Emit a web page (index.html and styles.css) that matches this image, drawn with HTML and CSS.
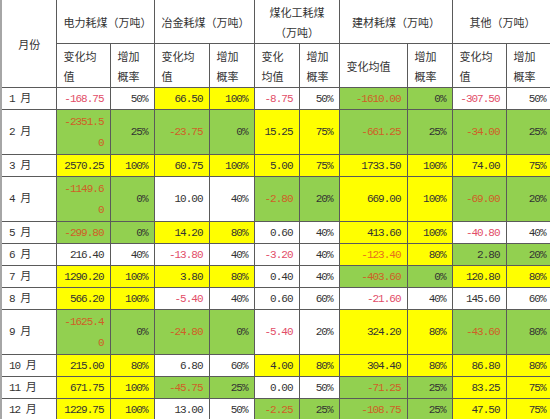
FILE: index.html
```html
<!DOCTYPE html>
<html lang="zh-CN">
<head>
<meta charset="utf-8">
<title>各行业耗煤变化</title>
<link rel="stylesheet" href="styles.css">
</head>
<body>
<table class="coal">
  <colgroup>
    <col class="c-month">
    <col class="c54"><col class="c44">
    <col class="c55"><col class="c45">
    <col class="c45"><col class="c40">
    <col class="c68"><col class="c45">
    <col class="c54"><col class="c46">
  </colgroup>
  <thead>
    <tr class="h1">
      <th rowspan="2" class="month-head">月份</th>
      <th colspan="2" class="grp">电力耗煤（万吨）</th>
      <th colspan="2" class="grp">冶金耗煤（万吨）</th>
      <th colspan="2" class="grp">煤化工耗煤<br>（万吨）</th>
      <th colspan="2" class="grp">建材耗煤（万吨）</th>
      <th colspan="2" class="grp">其他（万吨）</th>
    </tr>
    <tr class="h2">
      <th class="sub">变化均<br>值</th><th class="sub">增加<br>概率</th>
      <th class="sub">变化均<br>值</th><th class="sub">增加<br>概率</th>
      <th class="sub">变化<br>均值</th><th class="sub">增加<br>概率</th>
      <th class="sub">变化均值</th><th class="sub">增加<br>概率</th>
      <th class="sub">变化均<br>值</th><th class="sub">增加<br>概率</th>
    </tr>
  </thead>
  <tbody>
    <tr class="one">
      <td class="m">1 月</td>
      <td class="n neg">-168.75</td><td class="n">50%</td>
      <td class="n y">66.50</td><td class="n y">100%</td>
      <td class="n neg">-8.75</td><td class="n">50%</td>
      <td class="n g neg">-1610.00</td><td class="n g">0%</td>
      <td class="n neg">-307.50</td><td class="n">50%</td>
    </tr>
    <tr class="two">
      <td class="m">2 月</td>
      <td class="n g neg w2">-2351.5<br>0</td><td class="n g">25%</td>
      <td class="n g neg">-23.75</td><td class="n g">0%</td>
      <td class="n y">15.25</td><td class="n y">75%</td>
      <td class="n g neg">-661.25</td><td class="n g">25%</td>
      <td class="n g neg">-34.00</td><td class="n g">25%</td>
    </tr>
    <tr class="one">
      <td class="m">3 月</td>
      <td class="n y">2570.25</td><td class="n y">100%</td>
      <td class="n y">60.75</td><td class="n y">100%</td>
      <td class="n y">5.00</td><td class="n y">75%</td>
      <td class="n y">1733.50</td><td class="n y">100%</td>
      <td class="n y">74.00</td><td class="n y">75%</td>
    </tr>
    <tr class="two">
      <td class="m">4 月</td>
      <td class="n g neg w2">-1149.6<br>0</td><td class="n g">0%</td>
      <td class="n">10.00</td><td class="n">40%</td>
      <td class="n g neg">-2.80</td><td class="n g">20%</td>
      <td class="n y">669.00</td><td class="n y">100%</td>
      <td class="n g neg">-69.00</td><td class="n g">20%</td>
    </tr>
    <tr class="one">
      <td class="m">5 月</td>
      <td class="n g neg">-299.80</td><td class="n g">0%</td>
      <td class="n y">14.20</td><td class="n y">80%</td>
      <td class="n">0.60</td><td class="n">40%</td>
      <td class="n y">413.60</td><td class="n y">100%</td>
      <td class="n neg">-40.80</td><td class="n">40%</td>
    </tr>
    <tr class="one">
      <td class="m">6 月</td>
      <td class="n">216.40</td><td class="n">40%</td>
      <td class="n neg">-13.80</td><td class="n">40%</td>
      <td class="n neg">-3.20</td><td class="n">40%</td>
      <td class="n y neg">-123.40</td><td class="n y">80%</td>
      <td class="n g">2.80</td><td class="n g">20%</td>
    </tr>
    <tr class="one">
      <td class="m">7 月</td>
      <td class="n y">1290.20</td><td class="n y">100%</td>
      <td class="n y">3.80</td><td class="n y">80%</td>
      <td class="n">0.40</td><td class="n">40%</td>
      <td class="n g neg">-403.60</td><td class="n g">0%</td>
      <td class="n y">120.80</td><td class="n y">80%</td>
    </tr>
    <tr class="one">
      <td class="m">8 月</td>
      <td class="n y">566.20</td><td class="n y">100%</td>
      <td class="n neg">-5.40</td><td class="n">40%</td>
      <td class="n">0.60</td><td class="n">60%</td>
      <td class="n neg">-21.60</td><td class="n">40%</td>
      <td class="n">145.60</td><td class="n">60%</td>
    </tr>
    <tr class="two">
      <td class="m">9 月</td>
      <td class="n g neg w2">-1625.4<br>0</td><td class="n g">0%</td>
      <td class="n g neg">-24.80</td><td class="n g">0%</td>
      <td class="n neg">-5.40</td><td class="n">20%</td>
      <td class="n y">324.20</td><td class="n y">80%</td>
      <td class="n g neg">-43.60</td><td class="n g">80%</td>
    </tr>
    <tr class="one">
      <td class="m">10 月</td>
      <td class="n y">215.00</td><td class="n y">80%</td>
      <td class="n">6.80</td><td class="n">60%</td>
      <td class="n y">4.00</td><td class="n y">80%</td>
      <td class="n y">304.40</td><td class="n y">80%</td>
      <td class="n y">86.80</td><td class="n y">80%</td>
    </tr>
    <tr class="one">
      <td class="m">11 月</td>
      <td class="n y">671.75</td><td class="n y">100%</td>
      <td class="n g neg">-45.75</td><td class="n g">25%</td>
      <td class="n">0.00</td><td class="n">50%</td>
      <td class="n g neg">-71.25</td><td class="n g">25%</td>
      <td class="n y">83.25</td><td class="n y">75%</td>
    </tr>
    <tr class="one">
      <td class="m">12 月</td>
      <td class="n y">1229.75</td><td class="n y">100%</td>
      <td class="n">13.00</td><td class="n">50%</td>
      <td class="n g neg">-2.25</td><td class="n g">25%</td>
      <td class="n g neg">-108.75</td><td class="n g">25%</td>
      <td class="n y">47.50</td><td class="n y">75%</td>
    </tr>
  </tbody>
</table>
</body>
</html>
```

FILE: styles.css
```css
html, body {
  margin: 0;
  padding: 0;
  overflow: hidden;
  background: #ffffff;
}

.coal {
  border-collapse: collapse;
  table-layout: fixed;
  width: 551px;
  margin-top: -1px;
  border-left: 2px solid #a6a6a6;
  font-family: "Noto Sans CJK SC", "Liberation Sans", sans-serif;
  font-size: 11px;
  color: #333333;
}

.c-month { width: 55px; }
.c54 { width: 54px; }
.c44 { width: 44px; }
.c55 { width: 55px; }
.c45 { width: 45px; }
.c40 { width: 40px; }
.c68 { width: 68px; }
.c46 { width: 46px; }

.coal th,
.coal td {
  border: 1px solid #5a5a5a;
  padding: 0 6px 0 7px;
  vertical-align: middle;
  overflow: hidden;
  white-space: nowrap;
}

.coal th {
  font-weight: normal;
}

.h1 { height: 44px; }
.h2 { height: 44px; }
.one { height: 22px; }
.two { height: 44px; }

.month-head {
  text-align: center;
  border-left: none;
  padding-top: 4px;
}

.grp {
  text-align: center;
  line-height: 20px;
  padding: 4px 2px 0;
}

.sub {
  text-align: left;
  line-height: 20px;
  padding-top: 4px;
}

.m {
  text-align: left;
  padding-left: 7px;
  border-left: none;
  font-family: "Liberation Mono", "Noto Sans CJK SC", monospace;
  letter-spacing: -1px;
  line-height: 18px;
  padding-top: 3px;
}

.n {
  text-align: right;
  font-family: "Liberation Mono", "DejaVu Sans Mono", monospace;
  font-size: 11px;
  letter-spacing: -1px;
  line-height: 18px;
  padding-top: 3px;
}

.n.w2 {
  line-height: 21px;
  padding-top: 2px;
}

.y { background: #ffff00; }
.g { background: #92d050; }

.neg { color: #e24d68; }
.g.neg { color: #cf5f27; }
.y.neg { color: #e6701e; }
```
